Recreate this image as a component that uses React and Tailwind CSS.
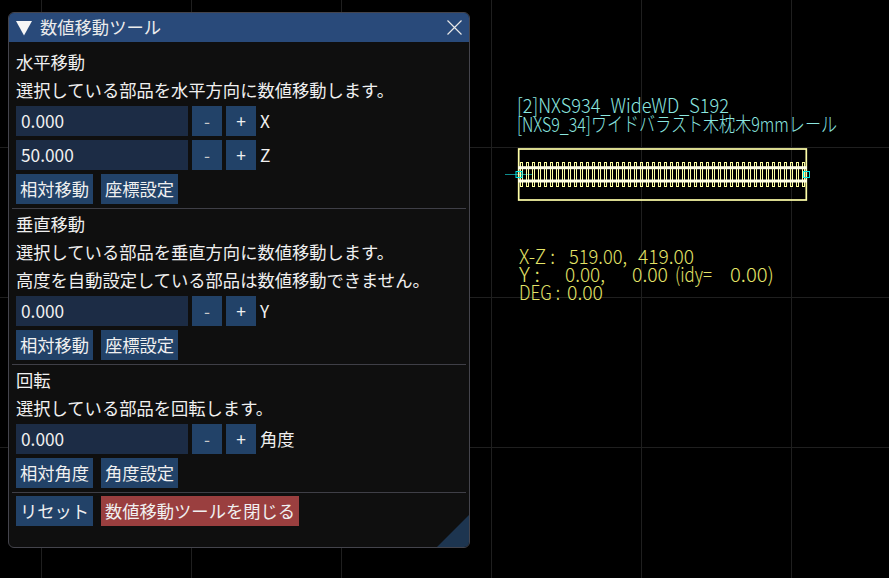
const jp = "font-['Noto_Sans_CJK_JP','Noto_Sans',sans-serif]";

function Btn({ w = "w-[77px]", red, children }) {
  return (
    <div className={`${w} h-[30px] flex items-center justify-center pb-px text-[17.3px] leading-none shrink-0 whitespace-nowrap ${red ? "bg-[#9a3f3f]" : "bg-[#224268]"}`}>
      {children}
    </div>
  );
}

function NumRow({ value, label }) {
  return (
    <div className="flex h-[30px] items-center">
      <div className="w-[172px] h-[30px] bg-[#1c2c45] flex items-center pl-[5px] text-[17.3px] leading-none">{value}</div>
      <div className="ml-1 flex gap-1">
        <Btn w="w-[30px]"><span className="text-[#c9c9c9]">-</span></Btn>
        <Btn w="w-[30px]">+</Btn>
      </div>
      <span className="ml-1 text-[17.3px] leading-none">{label}</span>
    </div>
  );
}

function Line({ children }) {
  return <div className="h-6 leading-6 text-[17.3px] whitespace-nowrap">{children}</div>;
}

function Sep() {
  return <div className="h-px bg-[#3f3f47] -mx-1 -mb-px" />;
}

function Actions({ a, b }) {
  return (
    <div className="flex gap-2">
      <Btn>{a}</Btn>
      <Btn>{b}</Btn>
    </div>
  );
}

function Canvas() {
  const sleepers = [];
  for (let i = 0; i < 48; i++) sleepers.push(520.5 + i * 6);
  const cyan = "#8ce8e0";
  const yel = "#e4e468";
  const t = (x, y, w, s, c) => (
    <text x={x} y={y} textLength={w} lengthAdjust="spacingAndGlyphs" fill={c} fontSize="20" fontWeight="300" fontFamily="'Noto Sans CJK JP','Noto Sans',sans-serif">{s}</text>
  );
  return (
    <svg className="absolute inset-0" width="889" height="578" viewBox="0 0 889 578">
      {[41, 191, 341, 491, 641, 791].map((x) => (
        <line key={x} x1={x + 0.5} y1="0" x2={x + 0.5} y2="578" stroke="#1f1f1f" />
      ))}
      {[147, 297, 447].map((y) => (
        <line key={y} x1="0" y1={y + 0.5} x2="889" y2={y + 0.5} stroke="#1f1f1f" />
      ))}
      {t(517, 113, 212, "[2]NXS934_WideWD_S192", cyan)}
      {t(517, 132, 320, "[NXS9_34]ワイドバラスト木枕木9mmレール", cyan)}
      <line x1="505" y1="174.5" x2="532" y2="174.5" stroke="#0e8c8c" />
      {sleepers.map((x) => (
        <rect key={x} x={x} y="162.5" width="2" height="24" fill="none" stroke="#ffffa0" strokeWidth="1" />
      ))}
      <rect x="518.7" y="149" width="287.6" height="51" fill="none" stroke="#ffffa8" strokeWidth="1.7" />
      <rect x="518" y="166.2" width="289" height="3" fill="#ffffe6" />
      <rect x="518" y="179.5" width="289" height="3" fill="#ffffe6" />
      <rect x="516" y="171.5" width="6" height="6" fill="none" stroke="#00e8e8" />
      <rect x="803.5" y="171.5" width="6" height="6" fill="none" stroke="#00e8e8" />
      {t(519, 264, 36, "X-Z :", yel)}
      {t(569, 264, 58, "519.00,", yel)}
      {t(638, 264, 56, "419.00", yel)}
      {t(519, 282, 21, "Y :", yel)}
      {t(565, 282, 40, "0.00,", yel)}
      {t(632, 282, 36, "0.00", yel)}
      {t(675, 282, 37, "(idy=", yel)}
      {t(730, 282, 44, "0.00)", yel)}
      {t(519, 300, 41, "DEG :", yel)}
      {t(567, 300, 36, "0.00", yel)}
    </svg>
  );
}

export default function App() {
  return (
    <div className={`relative w-[889px] h-[578px] bg-black overflow-hidden text-[#f0f0f0] ${jp}`}>
      <Canvas />
      <div className="absolute left-2 top-3 w-[462px] h-[536px] rounded-md border border-[#44444c] bg-[#0f0f0f] overflow-hidden">
        <div className="h-[29px] bg-[#294a7a] flex items-center relative">
          <svg className="ml-[7px] mt-px" width="17" height="15" viewBox="0 0 17 15">
            <polygon points="0,0 16,0 8,14.5" fill="#f6f6f6" />
          </svg>
          <span className="ml-[7px] pb-px text-[17.3px] leading-none text-[#ececec]">数値移動ツール</span>
          <svg className="absolute right-[7px] top-[7px]" width="15" height="15" viewBox="0 0 15 15">
            <path d="M0.5 0.5L14.5 14.5M14.5 0.5L0.5 14.5" stroke="#e8e8e8" strokeWidth="1.2" />
          </svg>
        </div>
        <div className="px-[7px] pt-2 flex flex-col gap-1">
          <Line>水平移動</Line>
          <Line>選択している部品を水平方向に数値移動します。</Line>
          <NumRow value="0.000" label="X" />
          <NumRow value="50.000" label="Z" />
          <Actions a="相対移動" b="座標設定" />
          <Sep />
          <Line>垂直移動</Line>
          <Line>選択している部品を垂直方向に数値移動します。</Line>
          <Line>高度を自動設定している部品は数値移動できません。</Line>
          <NumRow value="0.000" label="Y" />
          <Actions a="相対移動" b="座標設定" />
          <Sep />
          <Line>回転</Line>
          <Line>選択している部品を回転します。</Line>
          <NumRow value="0.000" label="角度" />
          <Actions a="相対角度" b="角度設定" />
          <Sep />
          <div className="flex gap-2">
            <Btn>リセット</Btn>
            <Btn w="w-[198px]" red>数値移動ツールを閉じる</Btn>
          </div>
        </div>
        <svg className="absolute right-0 bottom-0" width="32" height="32" viewBox="0 0 32 32">
          <polygon points="32,0 32,32 0,32" fill="#1d3550" />
        </svg>
      </div>
    </div>
  );
}
